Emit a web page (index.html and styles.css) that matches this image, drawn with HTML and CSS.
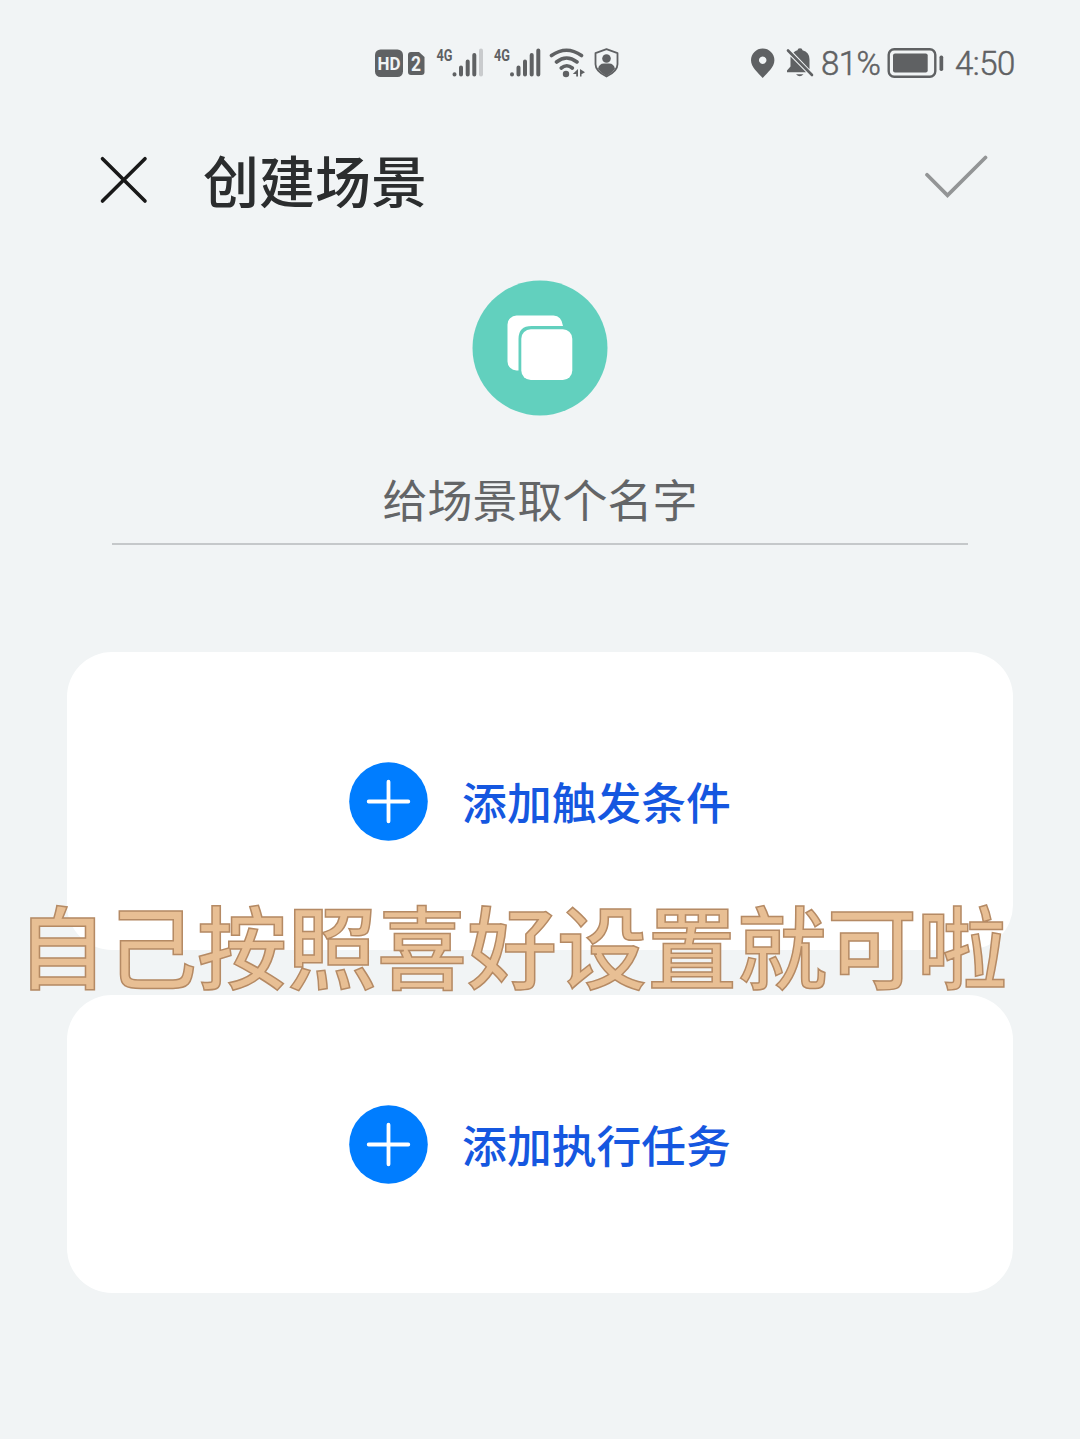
FILE: index.html
```html
<!DOCTYPE html>
<html lang="zh-CN">
<head>
<meta charset="utf-8">
<title>创建场景</title>
<link rel="stylesheet" href="styles.css">
</head>
<body>
<div class="screen">
  <div class="status">
    <svg class="status-left" width="250" height="40" viewBox="372 43 250 40">
      <rect x="375" y="49.500" width="28" height="27.500" rx="5.500" fill="#5f6163"/>
      <text class="badge" x="377.500" y="70" textLength="23" lengthAdjust="spacingAndGlyphs">HD</text>
      <path d="M411 52h8l5.500 5v15a3 3 0 0 1-3 3h-10.500a3 3 0 0 1-3-3v-17a3 3 0 0 1 3-3z" fill="#5f6163"/>
      <text class="badge badge-sim" x="411" y="70.500" textLength="10" lengthAdjust="spacingAndGlyphs">2</text>
      <text class="net" x="436.500" y="61" textLength="16" lengthAdjust="spacingAndGlyphs">4G</text>
      <g stroke="#5f6163" stroke-width="4" stroke-linecap="round">
        <path d="M454.500 74.200v.3M461 67.500v7M467.700 61.500v13M474.300 55v19.500"/>
        <path d="M481 50.500v24" stroke="#c9cbcd"/>
        <path d="M512 74.200v.3M518.500 67.500v7M525 61.500v13M531.700 55v19.500M538.300 50.500v24"/>
      </g>
      <text class="net" x="494" y="61" textLength="16" lengthAdjust="spacingAndGlyphs">4G</text>
      <g fill="none" stroke="#5f6163" stroke-width="3.600" stroke-linecap="round">
        <path d="M551.500 55.500q15-10.500 30 0M556.500 62q10-8 20.500 0M561.300 68q5.500-4.500 11 0"/>
      </g>
      <circle cx="566" cy="74" r="3.200" fill="#5f6163"/>
      <path d="M578 69v7.500h-1.800v-2.500h-3.400zM580 69v7.500h1.500v-2.200l3.500-2z" fill="#5f6163"/>
      <path d="M606.500 49.200l11 4v11q0 7-11 12.300q-11-5.300-11-12.300v-11z" fill="none" stroke="#5f6163" stroke-width="1.800" stroke-linejoin="round"/>
      <circle cx="606.500" cy="58.500" r="4.300" fill="#5f6163"/>
      <path d="M598 69q1-5.500 6-5.500h5q5 0 6 5.500q-3 4-8.500 7q-5.500-3-8.500-7z" fill="#5f6163"/>
    </svg>
    <div class="status-right">
      <svg width="66" height="40" viewBox="750 43 66 40">
        <path fill-rule="evenodd" d="M762.700 48.500a11.700 11.700 0 0 1 11.700 11.700c0 7-7 12.300-11.700 17.800c-4.700-5.500-11.700-10.800-11.700-17.800a11.700 11.700 0 0 1 11.700-11.700zm0 8a3.700 3.700 0 1 0 .01 0z" fill="#5f6163"/>
        <path d="M790.500 56.500l15.500 15.800h-19v-1.700l3.500-4zM793.500 52.500q2-2 4-2.300q0-2 2.500-2t2.500 2q7 2 7 9v10z" fill="#5f6163"/>
        <path d="M796 74.300h7.500q-3.700 4-7.500 0z" fill="#5f6163"/>
        <path d="M788 50.500l24 24.500" stroke="#5f6163" stroke-width="2.600" stroke-linecap="round"/>
      </svg>
      <span class="num battery-num">81%</span>
      <svg width="58" height="40" viewBox="887 43 58 40">
        <rect x="888.700" y="49.200" width="46.600" height="27.600" rx="5.500" fill="none" stroke="#5f6163" stroke-width="2.400"/>
        <rect x="893" y="53.500" width="34.700" height="19" rx="2" fill="#5f6163"/>
        <rect x="939.500" y="55.500" width="3.700" height="15.500" rx="1.700" fill="#5f6163"/>
      </svg>
      <span class="num clock">4:50</span>
    </div>
  </div>

  <header class="header">
    <svg width="50" height="50" viewBox="99 155 50 50">
      <path d="M102.500 158.700l42.500 42.300M145 158.700L102.500 201" fill="none" stroke="#191919" stroke-width="3.600" stroke-linecap="round"/>
    </svg>
    <h1 class="title">创建场景</h1>
    <svg width="66" height="50" viewBox="923 154.500 66 50">
      <path d="M927 174.300l20.500 20.500L985.500 157" fill="none" stroke="#939596" stroke-width="3.700" stroke-linecap="round" stroke-linejoin="miter"/>
    </svg>
  </header>

  <svg class="scene-icon" width="136" height="136" viewBox="472 280.500 136 136">
    <circle cx="540" cy="348.500" r="67.500" fill="#62d0be"/>
    <path d="M518.500 371h-2a9 9 0 0 1-9-9v-37a9 9 0 0 1 9-9h37q8 0 9.500 10.500h-31.500q-13 0-13 13z" fill="#fff"/>
    <rect x="521.300" y="329.800" width="51" height="50.800" rx="9.500" fill="#fff"/>
  </svg>

  <div class="name-field">给场景取个名字</div>

  <main class="cards">
    <section class="card">
      <svg class="plus" width="79" height="79" viewBox="0 0 79 79">
        <circle cx="39.500" cy="39.500" r="39.300" fill="#007dff"/>
        <path d="M39.500 19.700v39.600M19.700 39.500h39.600" stroke="#fff" stroke-width="3.800" stroke-linecap="round"/>
      </svg>
      <span class="card-label">添加触发条件</span>
    </section>
    <section class="card">
      <svg class="plus" width="79" height="79" viewBox="0 0 79 79">
        <circle cx="39.500" cy="39.500" r="39.300" fill="#007dff"/>
        <path d="M39.500 19.700v39.600M19.700 39.500h39.600" stroke="#fff" stroke-width="3.800" stroke-linecap="round"/>
      </svg>
      <span class="card-label">添加执行任务</span>
    </section>
    <div class="caption">自己按照喜好设置就可啦</div>
  </main>
</div>
</body>
</html>
```
FILE: styles.css
```css
* { box-sizing: border-box; }
body {
  margin: 0;
  background: #f1f4f5;
  font-family: "Noto Sans CJK SC", sans-serif;
}
.screen {
  height: 1439px;
  display: flex;
  flex-direction: column;
  overflow: hidden;
}
.status {
  height: 125px;
  padding: 43px 64px 0 372px;
  display: flex;
  justify-content: space-between;
  align-items: flex-start;
}
.status svg { display: block; }
.badge {
  font: 700 19px Roboto, sans-serif;
  fill: #f1f4f5;
}
.badge-sim { font-size: 20px; }
.net {
  font: 700 17px Roboto, sans-serif;
  fill: #5f6163;
}
.status-right {
  display: flex;
  align-items: flex-start;
}
.num {
  font: 300 33px/40px Roboto, sans-serif;
  letter-spacing: -0.500px;
  -webkit-text-stroke: 0.500px #5f6163;
  color: #5f6163;
  white-space: nowrap;
  padding-top: 1px;
}
.battery-num { width: 71px; padding-left: 5px; }
.clock { width: 71px; padding-left: 10px; }
.header {
  height: 110px;
  padding: 0 91px 0 99px;
  display: flex;
  align-items: center;
}
.title {
  margin: -2px auto 0 54px;
  font-size: 56px;
  font-weight: 500;
  line-height: 80px;
  color: #2b2d2e;
}
.scene-icon {
  margin: 45px auto 0;
  flex: none;
}
.name-field {
  margin: 44px 112px 0;
  height: 85px;
  line-height: 77px;
  font-size: 45px;
  text-align: center;
  color: #636567;
  border-bottom: 2px solid #c5c8ca;
}
.cards {
  position: relative;
  margin: 107px 67px 0;
  display: flex;
  flex-direction: column;
  gap: 45px;
}
.card {
  height: 298px;
  border-radius: 45px;
  background: #fff;
  display: flex;
  align-items: center;
  justify-content: center;
  gap: 34px;
}
.card-label {
  font-size: 44.800px;
  font-weight: 500;
  line-height: 66px;
  color: #1557e0;
}
.caption {
  position: absolute;
  left: -50px;
  top: 226px;
  font-size: 90px;
  line-height: 130px;
  font-weight: 500;
  white-space: nowrap;
  color: #e8bf94;
  -webkit-text-stroke: 1.500px #b58a64;
}
```
